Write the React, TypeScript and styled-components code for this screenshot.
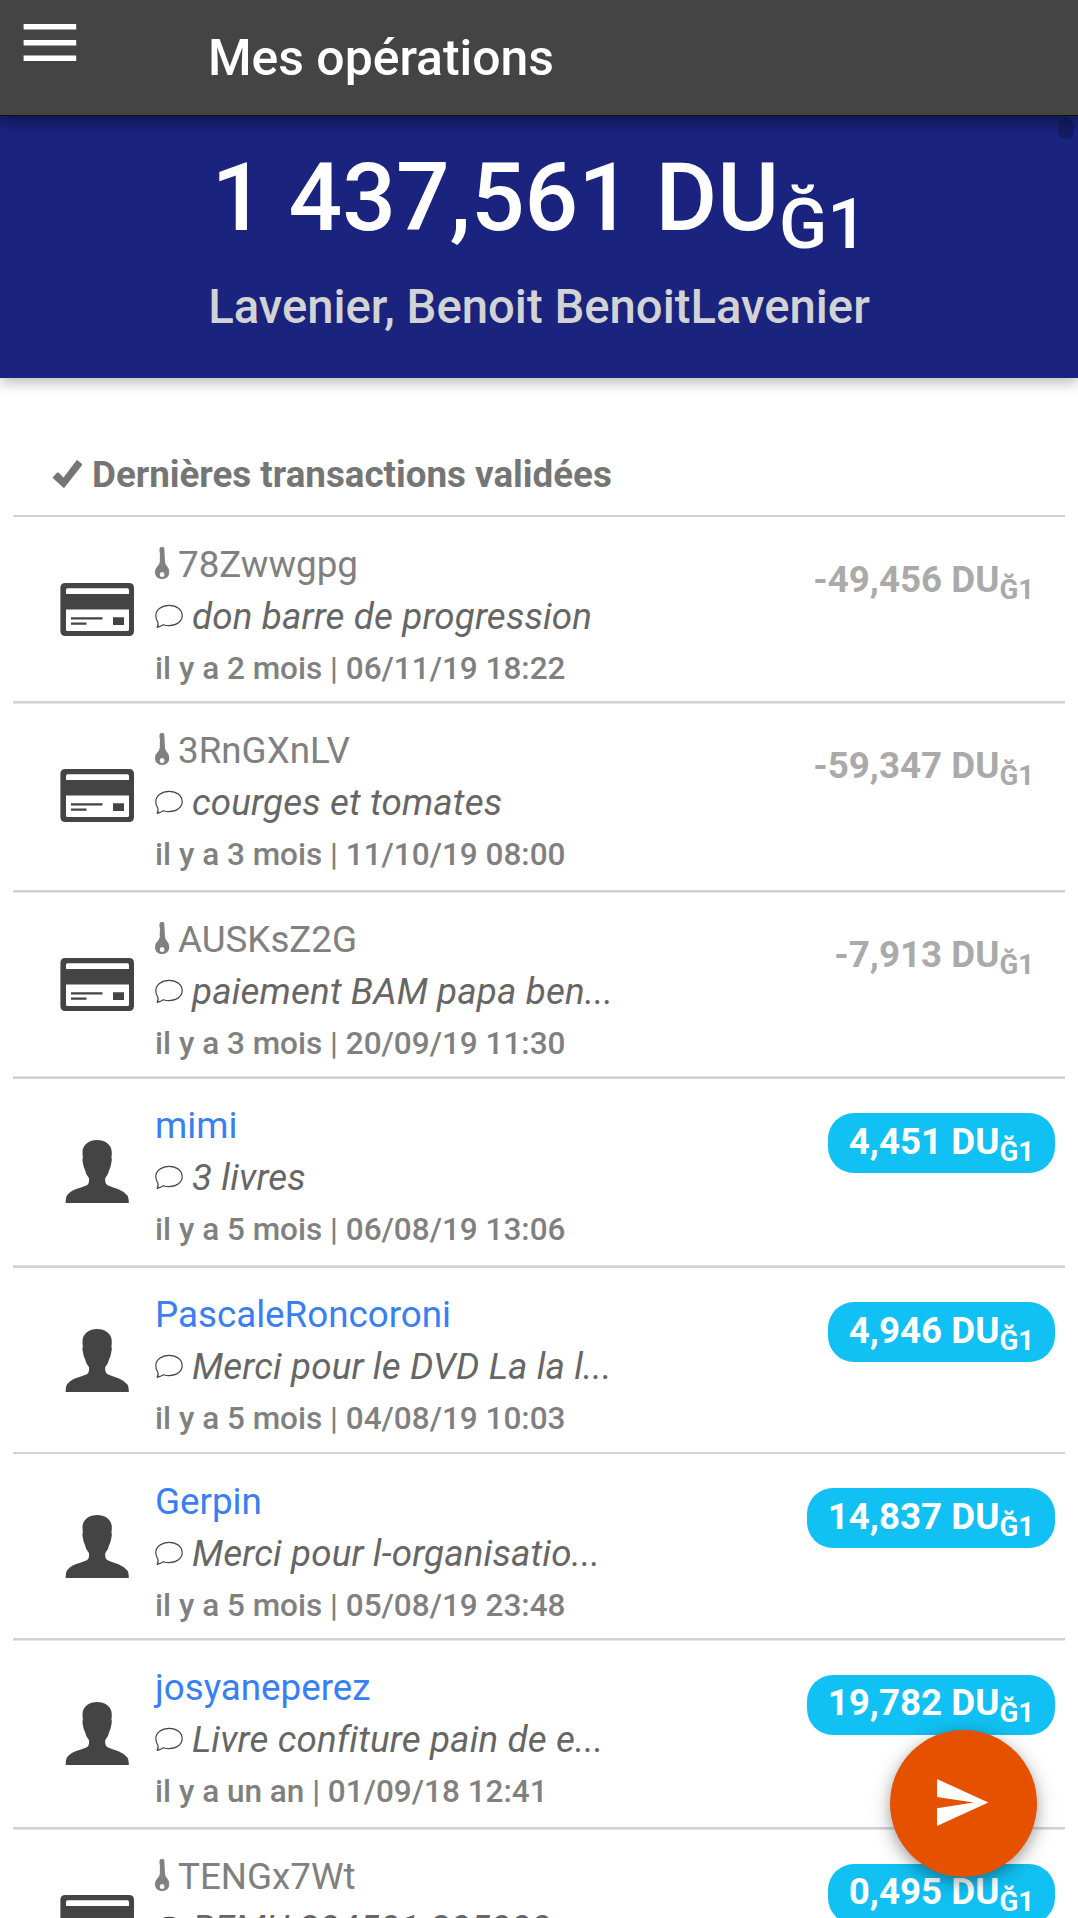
import React from 'react';
import styled, { createGlobalStyle } from 'styled-components';

const GlobalStyle = createGlobalStyle`
  *, *::before, *::after { box-sizing: border-box; }
  html, body { margin: 0; padding: 0; background: #fff; }
  body { font-family: Roboto, "Liberation Sans", sans-serif; overflow: hidden; }
`;

const Screen = styled.div`
  position: relative;
  width: 1078px;
  height: 1918px;
  overflow: hidden;
  display: flex;
  flex-direction: column;
  background: #fff;
`;

const TopBar = styled.header`
  flex: none;
  display: flex;
  align-items: flex-start;
  height: 116px;
  padding-left: 23px;
  background: #444;
  border-bottom: 1px solid #111;
  box-shadow: 0 5px 13px rgba(0, 0, 0, 0.42);
  z-index: 2;
`;

const MenuButton = styled.button`
  display: flex;
  width: 54px;
  margin: 23px 131px 0 0;
  padding: 0;
  border: 0;
  background: none;
`;

const Title = styled.h1`
  margin: 0;
  font-size: 49.875px;
  font-weight: 500;
  line-height: 117px;
  color: #fff;
`;

const Banner = styled.section`
  position: relative;
  flex: none;
  display: flex;
  flex-direction: column;
  align-items: center;
  height: 262px;
  background: #1a237e;
  box-shadow: 0 5px 13px rgba(0, 0, 0, 0.26);
  color: #fff;
  z-index: 1;
`;

const ScrollThumb = styled.span`
  position: absolute;
  top: 2px;
  right: 4px;
  width: 16px;
  height: 21px;
  border-radius: 8px;
  background: rgba(0, 0, 0, 0.2);
`;

const Balance = styled.div`
  margin-top: 25px;
  padding-left: 1px;
  font-size: 94.5px;
  font-weight: 500;
  line-height: 114px;
  white-space: nowrap;
`;

const Unit = styled.sub<{ $drop: number }>`
  position: relative;
  bottom: -${(p) => p.$drop}px;
  font-size: 75%;
  line-height: 0;
  vertical-align: baseline;
`;

const Owner = styled.div`
  margin-top: 23px;
  font-size: 47.25px;
  font-weight: 500;
  line-height: 58px;
  color: #d3d3d3;
`;

const List = styled.main`
  flex: none;
  display: flex;
  flex-direction: column;
  padding: 0 13px;
`;

const SectionTitle = styled.h2`
  display: flex;
  align-items: center;
  height: 137px;
  margin: 0;
  padding: 57px 0 0 39px;
  gap: 8px;
  font-size: 36.75px;
  font-weight: 700;
  line-height: 44px;
  color: #757575;
`;

type Edge = 'none' | 'top' | 'bottom';

const Row = styled.article<{ $height: number; $edge: Edge }>`
  display: flex;
  height: ${(p) => p.$height}px;
  background: ${(p) =>
    p.$edge === 'none'
      ? 'linear-gradient(#d2d2d2 2px, transparent 2px)'
      : p.$edge === 'top'
      ? 'linear-gradient(#dedede 1px, #d2d2d2 1px, #d2d2d2 3px, transparent 3px)'
      : 'linear-gradient(#d2d2d2 2px, #e6e6e6 2px, #e6e6e6 3px, transparent 3px)'};
`;

const Avatar = styled.div<{ $nudge: number }>`
  flex: none;
  width: 142px;
  padding: ${(p) => 62 + p.$nudge}px 0 0 46px;
  svg { display: block; }
`;

const Details = styled.div`
  flex: 1;
  display: flex;
  flex-direction: column;
  padding-top: 23px;
`;

const Name = styled.div<{ $known: boolean }>`
  display: flex;
  align-items: center;
  gap: 8px;
  height: 53px;
  font-size: 36.75px;
  line-height: 52px;
  color: ${(p) => (p.$known ? '#387ef5' : '#808080')};
  white-space: nowrap;
  svg { margin-top: -3px; }
`;

const Comment = styled.div`
  display: flex;
  align-items: center;
  gap: 8px;
  height: 52px;
  font-size: 36.75px;
  font-style: italic;
  letter-spacing: 0.15px;
  line-height: 52px;
  color: #666;
  white-space: nowrap;
  svg { margin-top: -2px; }
`;

const When = styled.div`
  height: 52px;
  font-size: 31.5px;
  font-weight: 500;
  line-height: 52px;
  color: #808080;
  white-space: nowrap;
`;

const Amount = styled.div<{ $credit: boolean; $nudge: number; $line: number }>`
  flex: none;
  align-self: flex-start;
  height: 60px;
  margin: ${(p) => 37 + p.$nudge}px 10px 0 0;
  padding: 0 21px;
  border-radius: 26px;
  background: ${(p) => (p.$credit ? '#11c1f3' : 'transparent')};
  color: ${(p) => (p.$credit ? '#fff' : '#aaa')};
  font-size: 36.75px;
  font-weight: 700;
  line-height: ${(p) => p.$line}px;
  white-space: nowrap;
`;

const SendButton = styled.button`
  position: absolute;
  left: 890px;
  top: 1730px;
  width: 147px;
  height: 147px;
  padding: 0;
  border: 0;
  border-radius: 50%;
  background: #e65100;
  box-shadow: 0 5px 13px rgba(0, 0, 0, 0.26), 0 5px 26px rgba(0, 0, 0, 0.16);
  z-index: 3;
  svg { display: block; }
`;

const MenuIcon = () => (
  <svg width="54" height="39" viewBox="0 0 54 39">
    <path fill="#fff" d="M.6 1h52.6v5.600H.6zM.6 17h52.600v5.600H.6zM.6 32.400h52.600V38H.6z" />
  </svg>
);

const CheckIcon = () => (
  <svg width="32" height="32" viewBox="0 0 32 32">
    <path fill="#757575" d="M.8 18.2 5.2 13.6Q6 13.2 6.8 13.8L11.6 18.4 24.4 1.6Q25 .8 25.8 1.4L29.8 4.8Q30.4 5.4 30 6.2L12.8 28.2Q12 29.2 11.2 28.4L1 19.2Q.4 18.8.8 18.2Z" />
  </svg>
);

const KeyIcon = () => (
  <svg width="15" height="34" viewBox="0 0 15 34">
    <path
      fill="#808080"
      fillRule="evenodd"
      d="M4.600 2.400Q4.800 1 7 1t2.300 1.400L10 15.500Q10.200 18.200 11.600 19.600 14.200 22.400 14.200 26.200C14.200 30.400 11.200 33 7.100 33S0 30.400 0 26.200Q0 22.400 3 19.600 4.400 18.200 4.500 16.400L5.100 15.200 4.500 14 5.100 12.600 4.600 11.200 5.200 10 4.700 8.600 5.200 7.200 4.400 5.800ZM7.100 25.900a2.400 2.500 0 1 0 0 5 2.400 2.500 0 1 0 0-5Z"
    />
  </svg>
);

const BubbleIcon = () => (
  <svg width="29" height="26" viewBox="0 0 29 26">
    <path
      fill="none"
      stroke="#444"
      strokeWidth="1.2"
      strokeLinejoin="round"
      d="M14.2 2.300C21.600 2.300 27.200 6.800 27.200 12.600 27.200 18.400 21.600 22.700 14.200 22.700Q11 22.700 8.400 21.700 5.800 23.300 2.200 24.300 3.800 21.500 2.800 19.100.8 16.200.8 12.600C.8 6.800 6.800 2.300 14.200 2.300Z"
    />
  </svg>
);

const CardIcon = () => (
  <svg width="76" height="66" viewBox="0 0 76 66">
    <path
      fill="#444"
      fillRule="evenodd"
      d="M6.300 6H70Q75 6 75 11V54Q75 59 70 59H6.300Q1.400 59 1.400 54V11Q1.400 6 6.300 6ZM8.500 11.300Q7 11.300 7 13V17H70V13Q70 11.300 68.500 11.300ZM7 32.500V52.500Q7 54 8.500 54H68.500Q70 54 70 52.500V32.500ZM12 40.200H43.500V42.600H12ZM12 45.400H27.500V47.800H12ZM54 40.200H65V48H54Z"
    />
  </svg>
);

const PersonIcon = () => (
  <svg width="76" height="66" viewBox="0 0 76 66">
    <path
      fill="#444"
      d="M38.100 2C45.800 2 52.800 6.400 52.800 14.200Q52.800 17.500 52.400 19.600 53.200 21.200 52.500 24 51.800 29 50.200 32 49.400 36.600 46.200 40.200V43.600Q46.600 46.200 48.600 47.200 53 49.200 59.500 51.200 65.500 53.800 68.400 57.400 69.800 59.400 69.800 65H6.700Q6.700 59.400 7.900 57.400 10.600 53.800 16.600 51.200 23 49.200 27.800 47.200 29.800 46.200 30 43.600V40.200Q26.800 36.600 26 32 24.400 29 23.700 24 23 21.200 23.900 19.600 23.500 17.500 23.500 14.200C23.500 6.400 30.400 2 38.100 2Z"
    />
  </svg>
);

const SendIcon = () => (
  <svg width="147" height="147" viewBox="0 0 147 147">
    <path fill="#fff" d="M47 49 98.300 72.500 47 96V78.200L83.800 72.500 47 67Z" />
  </svg>
);

interface Operation {
  name: string;
  known: boolean;
  credit: boolean;
  comment: string;
  when: string;
  amount: string;
  height: number;
  edge: Edge;
  nudge?: number;
  amountLine?: number;
}

const operations: Operation[] = [
  { name: '78Zwwgpg', known: false, credit: false, comment: 'don barre de progression', when: 'il y a 2 mois | 06/11/19 18:22', amount: '-49,456', height: 186, edge: 'none' },
  { name: '3RnGXnLV', known: false, credit: false, comment: 'courges et tomates', when: 'il y a 3 mois | 11/10/19 08:00', amount: '-59,347', height: 189, edge: 'bottom' },
  { name: 'AUSKsZ2G', known: false, credit: false, comment: 'paiement BAM papa ben...', when: 'il y a 3 mois | 20/09/19 11:30', amount: '-7,913', height: 186, edge: 'bottom' },
  { name: 'mimi', known: true, credit: true, comment: '3 livres', when: 'il y a 5 mois | 06/08/19 13:06', amount: '4,451', height: 189, edge: 'top', amountLine: 58 },
  { name: 'PascaleRoncoroni', known: true, credit: true, comment: 'Merci pour le DVD La la l...', when: 'il y a 5 mois | 04/08/19 10:03', amount: '4,946', height: 187, edge: 'top', amountLine: 58 },
  { name: 'Gerpin', known: true, credit: true, comment: 'Merci pour l-organisatio...', when: 'il y a 5 mois | 05/08/19 23:48', amount: '14,837', height: 186, edge: 'none', nudge: -1, amountLine: 58 },
  { name: 'josyaneperez', known: true, credit: true, comment: 'Livre confiture pain de e...', when: 'il y a un an | 01/09/18 12:41', amount: '19,782', height: 189, edge: 'bottom' },
  { name: 'TENGx7Wt', known: false, credit: true, comment: 'REMU 204501-205000', when: 'il y a un an | 28/08/18 10:12', amount: '0,495', height: 187, edge: 'bottom' },
];

const OperationRow = ({ op }: { op: Operation }) => (
  <Row $height={op.height} $edge={op.edge}>
    <Avatar $nudge={op.nudge ?? 0}>{op.known ? <PersonIcon /> : <CardIcon />}</Avatar>
    <Details>
      <Name $known={op.known}>
        {!op.known && <KeyIcon />}
        <span>{op.name}</span>
      </Name>
      <Comment>
        <BubbleIcon />
        <span>{op.comment}</span>
      </Comment>
      <When>{op.when}</When>
    </Details>
    <Amount $credit={op.credit} $nudge={op.nudge ?? 0} $line={op.amountLine ?? 56}>
      {op.amount} DU<Unit $drop={7}>Ğ1</Unit>
    </Amount>
  </Row>
);

export default function App() {
  return (
    <Screen>
      <GlobalStyle />
      <TopBar>
        <MenuButton aria-label="Menu">
          <MenuIcon />
        </MenuButton>
        <Title>Mes opérations</Title>
      </TopBar>
      <Banner>
        <ScrollThumb />
        <Balance>
          1 437,561 DU<Unit $drop={18}>Ğ1</Unit>
        </Balance>
        <Owner>Lavenier, Benoit BenoitLavenier</Owner>
      </Banner>
      <List>
        <SectionTitle>
          <CheckIcon />
          <span>Dernières transactions validées</span>
        </SectionTitle>
        {operations.map((op) => (
          <OperationRow key={op.name} op={op} />
        ))}
      </List>
      <SendButton aria-label="Envoyer">
        <SendIcon />
      </SendButton>
    </Screen>
  );
}
